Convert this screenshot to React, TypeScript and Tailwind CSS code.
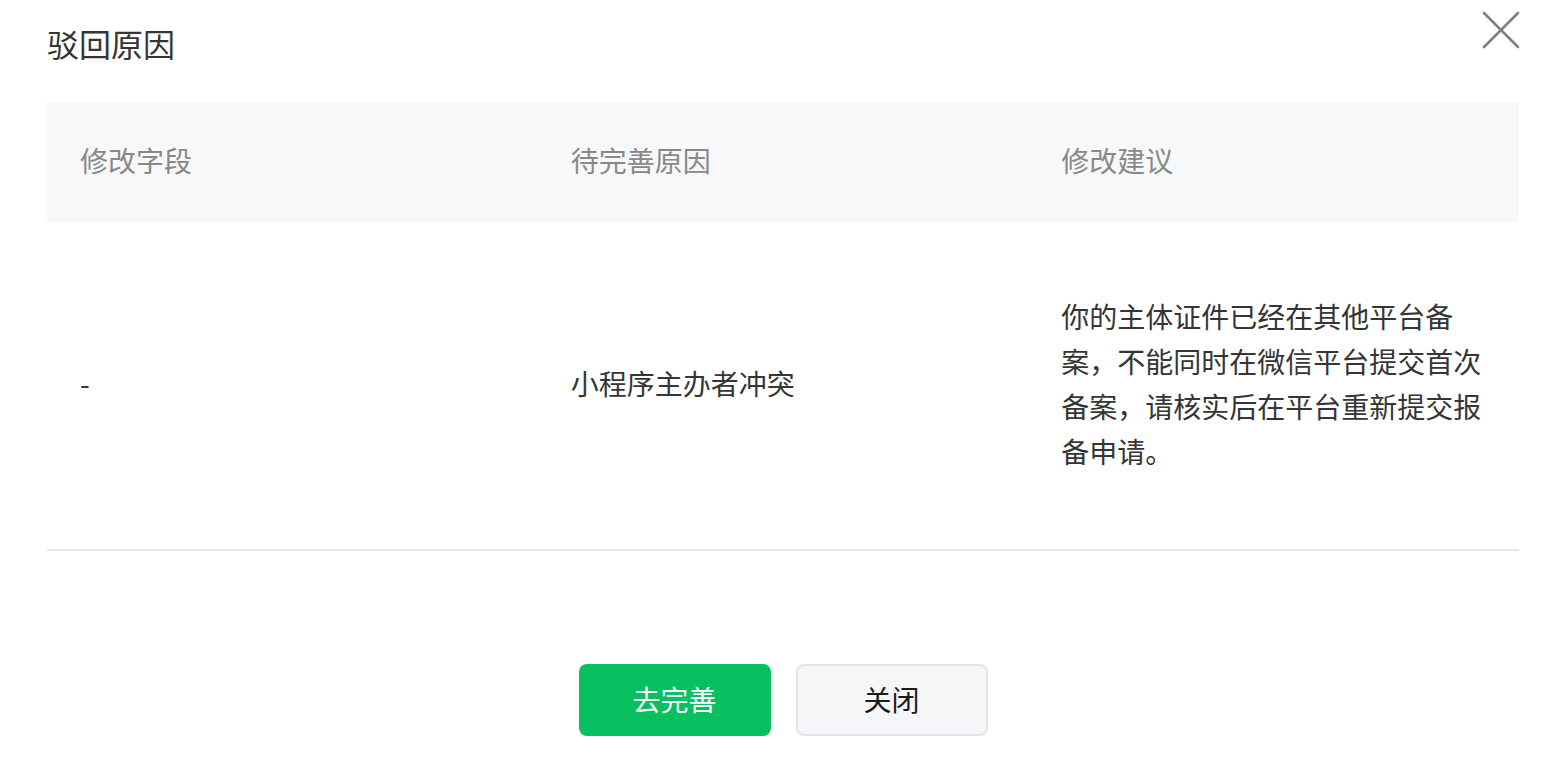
import React from 'react';

const rows = [
  {
    field: '-',
    reason: '小程序主办者冲突',
    advice: '你的主体证件已经在其他平台备案，不能同时在微信平台提交首次备案，请核实后在平台重新提交报备申请。',
  },
];

const CloseIcon = () => (
  <svg width="38" height="38" viewBox="0 0 38 38" fill="none">
    <path d="M2 2L36 36M36 2L2 36" stroke="#808080" strokeWidth="2.6" strokeLinecap="round" />
  </svg>
);

export default function App() {
  return (
    <div
      className="relative w-full min-h-screen bg-white pl-[47px] pr-[43px]"
      style={{ fontFamily: '"Noto Sans CJK SC", "Noto Sans", sans-serif' }}
    >
      <button className="absolute right-[42px] top-[11px] p-0" aria-label="关闭">
        <CloseIcon />
      </button>

      <h2 className="pt-[27px] pb-[2px] mb-[41px] text-[32px] leading-[32px] font-normal text-[#353535]">驳回原因</h2>

      <table className="w-full table-fixed border-collapse">
        <thead>
          <tr className="bg-[#f7f8fa]">
            <th className="pl-[33px] pt-[38px] pb-[42px] text-left text-[28px] leading-[40px] font-normal text-[#888888]">修改字段</th>
            <th className="pl-[33px] pt-[38px] pb-[42px] text-left text-[28px] leading-[40px] font-normal text-[#888888]">待完善原因</th>
            <th className="pl-[33px] pt-[38px] pb-[42px] text-left text-[28px] leading-[40px] font-normal text-[#888888]">修改建议</th>
          </tr>
        </thead>
        <tbody>
          {rows.map((row, i) => (
            <tr key={i} className="border-b-2 border-[#e6e6eb]">
              <td className="pl-[33px] pr-[32px] pb-[4px] align-middle text-[28px] leading-[45px] text-[#353535]">{row.field}</td>
              <td className="pl-[33px] pr-[32px] pb-[4px] align-middle text-[28px] leading-[45px] text-[#353535]">{row.reason}</td>
              <td className="pl-[33px] pr-[32px] pt-[72px] pb-[75px] align-middle text-[28px] leading-[45px] text-[#353535]">
                {row.advice}
              </td>
            </tr>
          ))}
        </tbody>
      </table>

      <div className="flex justify-center gap-[25px] pt-[113px] pb-[28px]">
        <button className="w-[192px] h-[72px] pb-[3px] rounded-[8px] bg-[#07c160] text-white text-[28px] leading-none">
          去完善
        </button>
        <button className="w-[192px] h-[72px] pb-[3px] rounded-[8px] border-2 border-[#e4e5e8] bg-[#f5f6f8] text-[#1b1b1b] text-[28px] leading-none">
          关闭
        </button>
      </div>
    </div>
  );
}
